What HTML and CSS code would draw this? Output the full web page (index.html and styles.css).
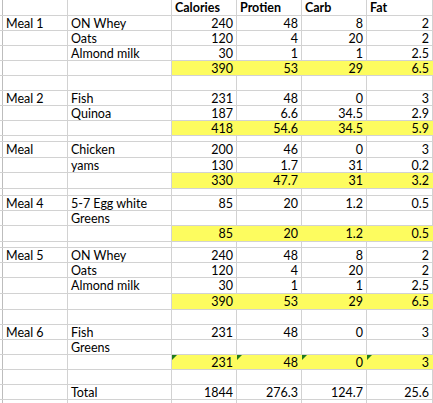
FILE: index.html
```html
<!DOCTYPE html>
<html>
<head>
<meta charset="utf-8">
<link rel="stylesheet" href="styles.css">
</head>
<body>
<div class="sheet">
  <div class="row r16"><div class="c"></div><div class="c"></div><div class="c"></div><div class="c b">Calories</div><div class="c b">Protien</div><div class="c b">Carb</div><div class="c b">Fat</div></div>
  <div class="row r15"><div class="c"></div><div class="c">Meal 1</div><div class="c">ON Whey</div><div class="c n">240</div><div class="c n">48</div><div class="c n">8</div><div class="c n">2</div></div>
  <div class="row r15"><div class="c"></div><div class="c"></div><div class="c">Oats</div><div class="c n">120</div><div class="c n">4</div><div class="c n">20</div><div class="c n">2</div></div>
  <div class="row r15"><div class="c"></div><div class="c"></div><div class="c">Almond milk</div><div class="c n">30</div><div class="c n">1</div><div class="c n">1</div><div class="c n">2.5</div></div>
  <div class="row r15"><div class="c"></div><div class="c"></div><div class="c"></div><div class="c n y">390</div><div class="c n y">53</div><div class="c n y">29</div><div class="c n y">6.5</div></div>
  <div class="row r15"><div class="c"></div><div class="c"></div><div class="c"></div><div class="c"></div><div class="c"></div><div class="c"></div><div class="c"></div></div>

  <div class="row r15"><div class="c"></div><div class="c">Meal 2</div><div class="c">Fish</div><div class="c n">231</div><div class="c n">48</div><div class="c n">0</div><div class="c n">3</div></div>
  <div class="row r15"><div class="c"></div><div class="c"></div><div class="c">Quinoa</div><div class="c n">187</div><div class="c n">6.6</div><div class="c n">34.5</div><div class="c n">2.9</div></div>
  <div class="row r15"><div class="c"></div><div class="c"></div><div class="c"></div><div class="c n y">418</div><div class="c n y">54.6</div><div class="c n y">34.5</div><div class="c n y">5.9</div></div>
  <div class="row r6"><div class="c"></div><div class="c"></div><div class="c"></div><div class="c"></div><div class="c"></div><div class="c"></div><div class="c"></div></div>

  <div class="row r16"><div class="c"></div><div class="c">Meal</div><div class="c">Chicken</div><div class="c n">200</div><div class="c n">46</div><div class="c n">0</div><div class="c n">3</div></div>
  <div class="row r15"><div class="c"></div><div class="c"></div><div class="c">yams</div><div class="c n">130</div><div class="c n">1.7</div><div class="c n">31</div><div class="c n">0.2</div></div>
  <div class="row r16"><div class="c"></div><div class="c"></div><div class="c"></div><div class="c n y">330</div><div class="c n y">47.7</div><div class="c n y">31</div><div class="c n y">3.2</div></div>
  <div class="row r7"><div class="c"></div><div class="c"></div><div class="c"></div><div class="c"></div><div class="c"></div><div class="c"></div><div class="c"></div></div>

  <div class="row r15"><div class="c"></div><div class="c">Meal 4</div><div class="c">5-7 Egg white</div><div class="c n">85</div><div class="c n">20</div><div class="c n">1.2</div><div class="c n">0.5</div></div>
  <div class="row r15"><div class="c"></div><div class="c"></div><div class="c">Greens</div><div class="c"></div><div class="c"></div><div class="c"></div><div class="c"></div></div>
  <div class="row r16"><div class="c"></div><div class="c"></div><div class="c"></div><div class="c n y">85</div><div class="c n y">20</div><div class="c n y">1.2</div><div class="c n y">0.5</div></div>
  <div class="row r6"><div class="c"></div><div class="c"></div><div class="c"></div><div class="c"></div><div class="c"></div><div class="c"></div><div class="c"></div></div>

  <div class="row r15"><div class="c"></div><div class="c">Meal 5</div><div class="c">ON Whey</div><div class="c n">240</div><div class="c n">48</div><div class="c n">8</div><div class="c n">2</div></div>
  <div class="row r15"><div class="c"></div><div class="c"></div><div class="c">Oats</div><div class="c n">120</div><div class="c n">4</div><div class="c n">20</div><div class="c n">2</div></div>
  <div class="row r16"><div class="c"></div><div class="c"></div><div class="c">Almond milk</div><div class="c n">30</div><div class="c n">1</div><div class="c n">1</div><div class="c n">2.5</div></div>
  <div class="row r16"><div class="c"></div><div class="c"></div><div class="c"></div><div class="c n y">390</div><div class="c n y">53</div><div class="c n y">29</div><div class="c n y">6.5</div></div>
  <div class="row r15"><div class="c"></div><div class="c"></div><div class="c"></div><div class="c"></div><div class="c"></div><div class="c"></div><div class="c"></div></div>

  <div class="row r15"><div class="c"></div><div class="c">Meal 6</div><div class="c">Fish</div><div class="c n">231</div><div class="c n">48</div><div class="c n">0</div><div class="c n">3</div></div>
  <div class="row r15"><div class="c"></div><div class="c"></div><div class="c">Greens</div><div class="c"></div><div class="c"></div><div class="c"></div><div class="c"></div></div>
  <div class="row r15"><div class="c"></div><div class="c"></div><div class="c"></div><div class="c n y t">231</div><div class="c n y t">48</div><div class="c n y t">0</div><div class="c n y t">3</div></div>
  <div class="row r15"><div class="c"></div><div class="c"></div><div class="c"></div><div class="c"></div><div class="c"></div><div class="c"></div><div class="c"></div></div>

  <div class="row r15"><div class="c"></div><div class="c"></div><div class="c">Total</div><div class="c n">1844</div><div class="c n">276.3</div><div class="c n">124.7</div><div class="c n">25.6</div></div>
  <div class="row r15"><div class="c"></div><div class="c"></div><div class="c"></div><div class="c"></div><div class="c"></div><div class="c"></div><div class="c"></div></div>
</div>
</body>
</html>
```

FILE: styles.css
```css
html, body {
  margin: 0;
  padding: 0;
  background: #ffffff;
}
.sheet {
  width: 433px;
  height: 403px;
  overflow: hidden;
  font-family: Lato, "Liberation Sans", sans-serif;
  font-size: 12.5px;
  color: #000000;
}
.row {
  display: grid;
  grid-template-columns: 3px 65px 104px 65px 65px 65px 66px;
  box-sizing: border-box;
  border-bottom: 1px solid #d2d2d2;
}
.r16 { height: 16px; }
.r15 { height: 15px; }
.r7 { height: 7px; }
.r6 { height: 6px; }
.c {
  position: relative;
  box-sizing: border-box;
  border-right: 1px solid #d2d2d2;
  padding: 1px 3px 0 3px;
  display: flex;
  align-items: center;
  white-space: nowrap;
  overflow: hidden;
  line-height: 14px;
}
.c:first-child {
  padding: 0;
  border-right-color: #bdbdbd;
}
.b { font-weight: bold; }
.n { justify-content: flex-end; padding-right: 3px; }
.y {
  background: #fdfc5f;
  border-right-color: #fdfc5f;
}
.t::before {
  content: "";
  position: absolute;
  left: 0;
  top: 0;
  width: 0;
  height: 0;
  border-top: 5px solid #1f7a1f;
  border-right: 5px solid transparent;
}
```
